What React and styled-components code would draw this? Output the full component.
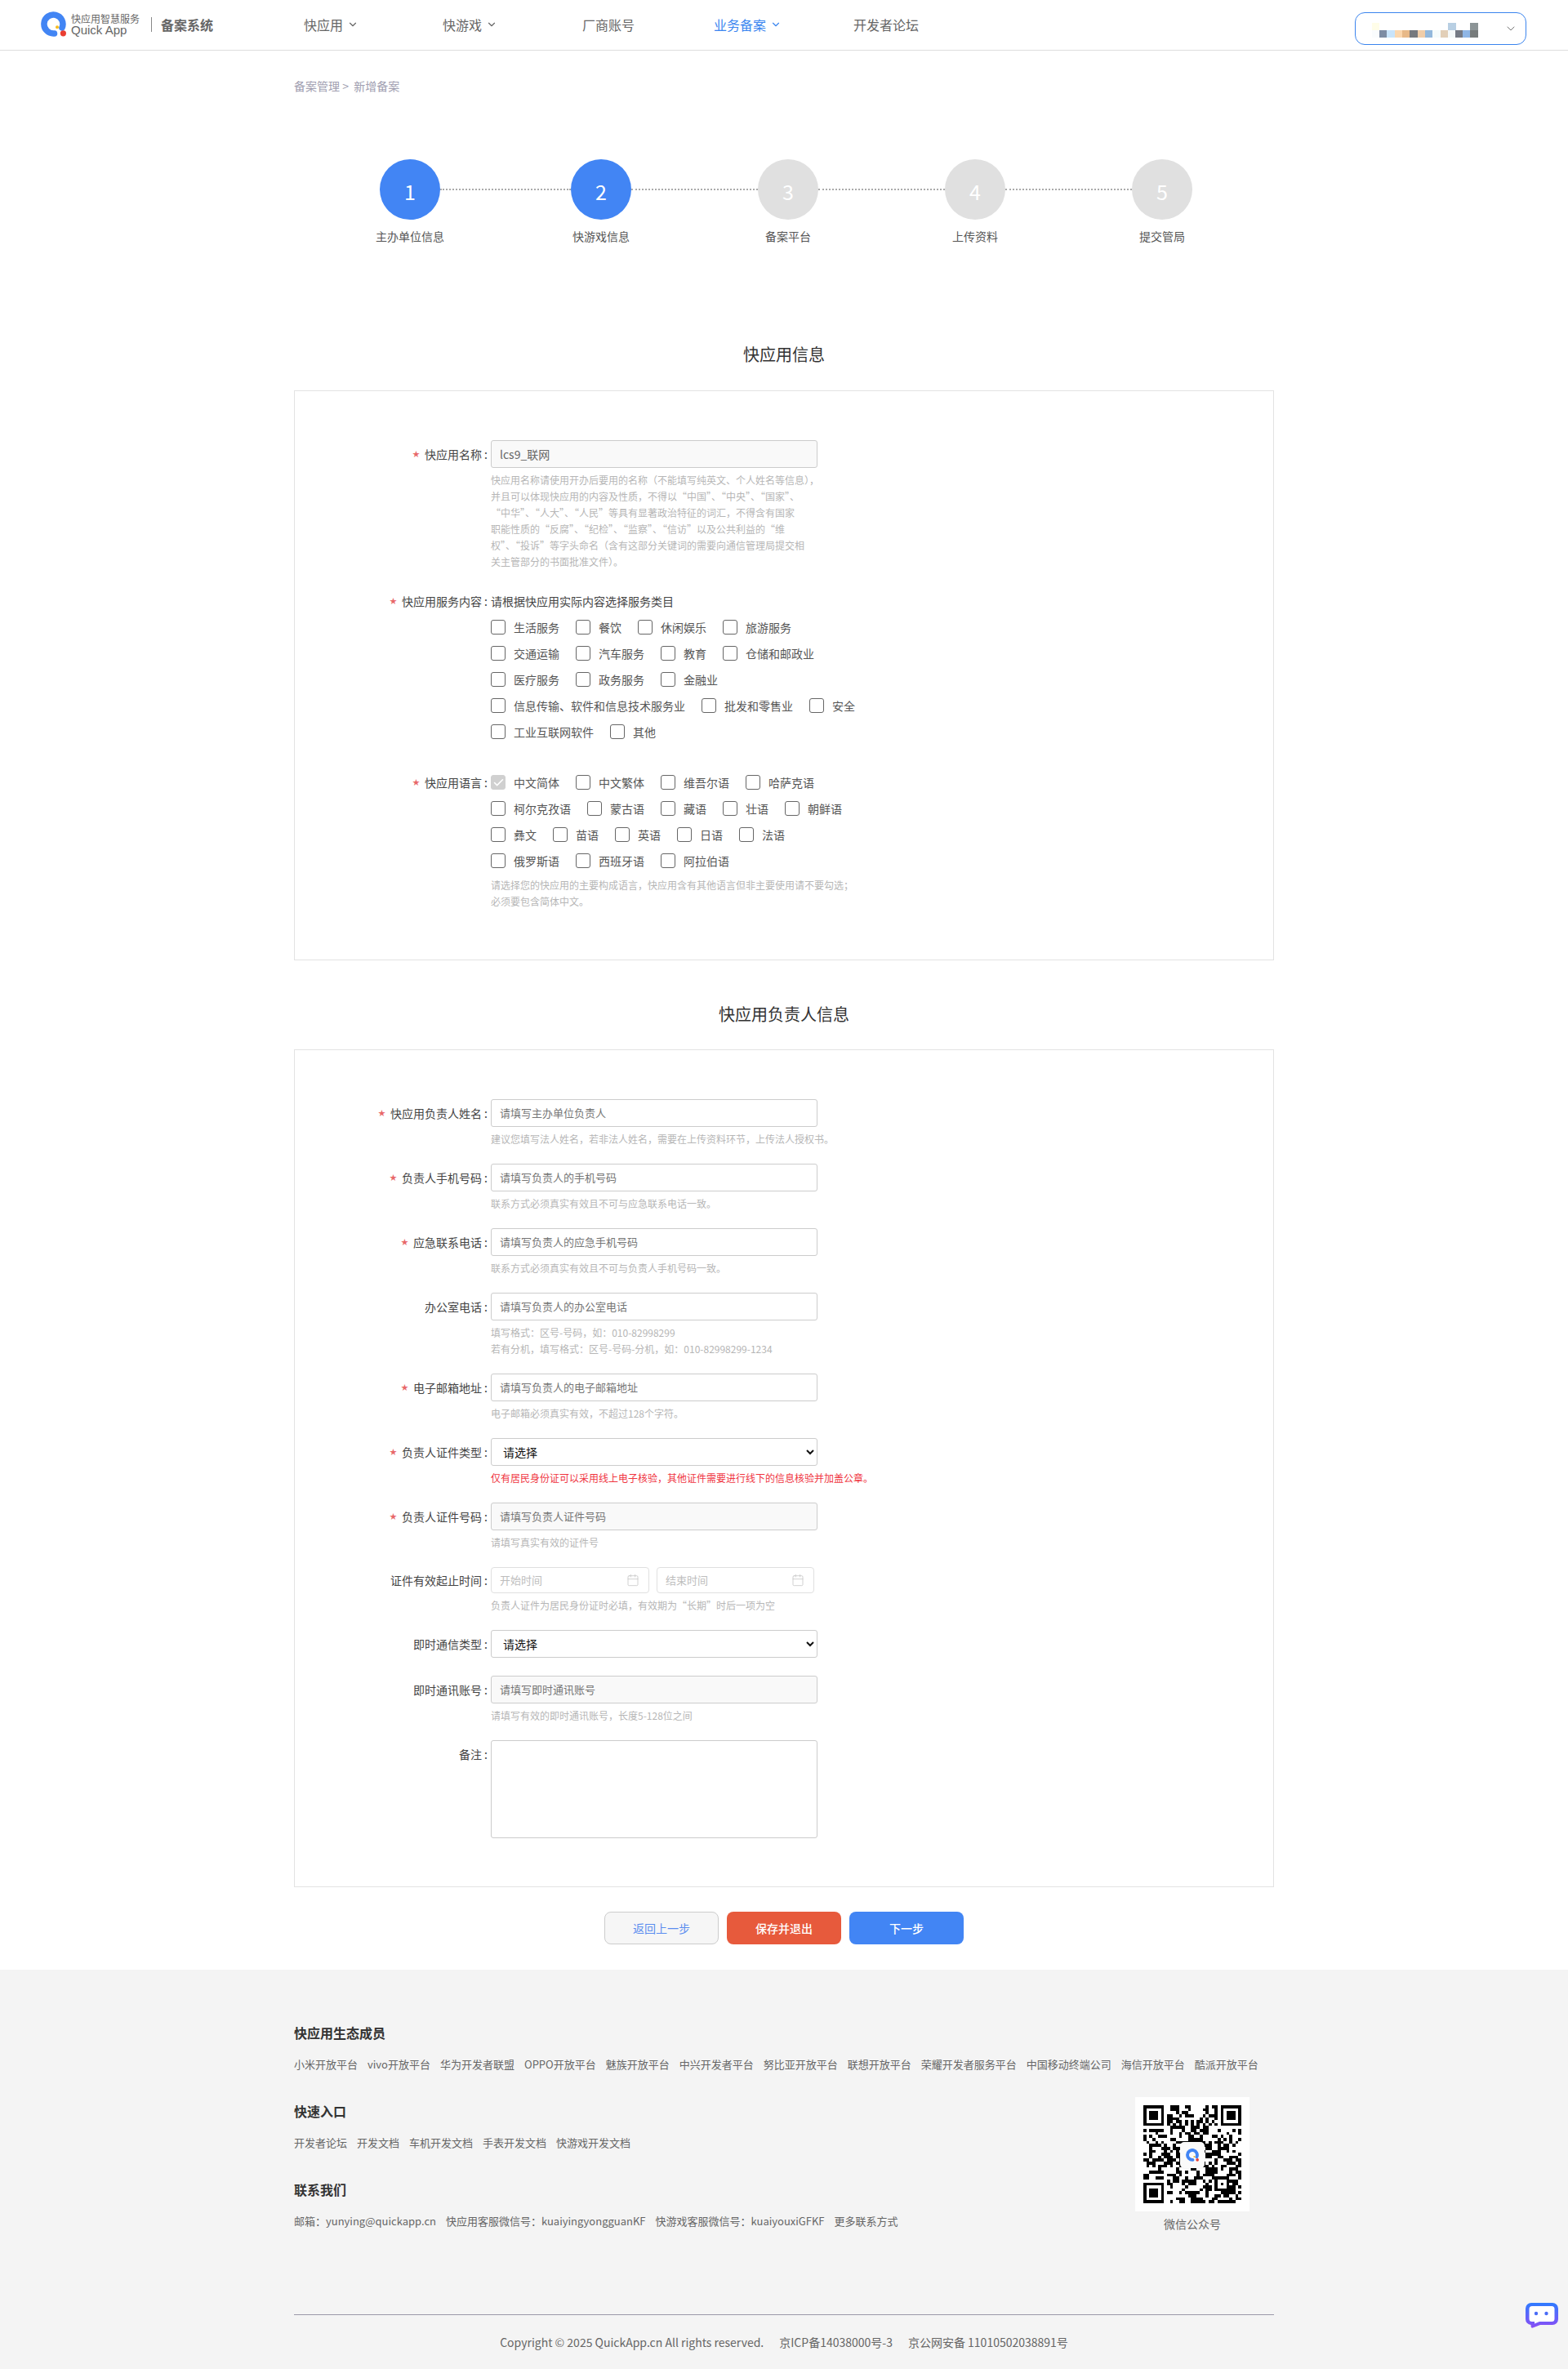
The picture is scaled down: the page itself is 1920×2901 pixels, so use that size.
import React from 'react';
import styled, { createGlobalStyle } from 'styled-components';
import { Calendar, Check, ChevronDown } from 'lucide-react';

const GlobalStyle = createGlobalStyle`
  html, body {
    margin: 0;
    padding: 0;
    background: #fff;
    font-family: "Noto Sans CJK SC", "Noto Sans", sans-serif;
    color: #444;
  }
  * {
    box-sizing: border-box;
  }
`;

const Page = styled.div`
  position: relative;
  width: 1920px;
  min-height: 2901px;
`;

const Header = styled.header`
  display: flex;
  align-items: center;
  height: 62px;
  padding: 0 51px 0 50px;
  border-bottom: 1px solid #ddd;
`;

const Brand = styled.div`
  display: flex;
  align-items: center;
  width: 322px;
  margin-bottom: 2px;
`;

const BrandText = styled.div`
  display: flex;
  flex-direction: column;
  margin-left: 6px;
  color: #666;
`;

const BrandCn = styled.span`
  font-size: 12px;
  line-height: 13px;
`;

const BrandEn = styled.span`
  font-family: "Liberation Sans", sans-serif;
  font-size: 15px;
  line-height: 15px;
`;

const BrandDivider = styled.span`
  width: 1px;
  height: 18px;
  margin: 0 11px 0 14px;
  background: #888;
`;

const BrandSystem = styled.span`
  font-size: 16px;
  font-weight: 700;
  color: #666;
`;

const Nav = styled.nav`
  display: grid;
  grid-template-columns: 170px 171px 161px 171px auto;
  flex: 1;
  align-items: center;
  margin-bottom: 2px;
`;

const NavItem = styled.a`
  display: flex;
  align-items: center;
  font-size: 16px;
  color: ${(p) => (p.$active ? '#3b86f0' : '#666')};

  svg {
    margin-left: 5px;
  }
`;

const Account = styled.div`
  display: flex;
  align-items: center;
  justify-content: space-between;
  width: 210px;
  height: 40px;
  margin-top: 9px;
  padding: 0 10px 0 20px;
  border: 1px solid #3a84ee;
  border-radius: 12px;
  color: #777;
`;

const MosaicSvg = styled.svg`
  margin-top: 4px;
`;

const Main = styled.main`
  width: 1200px;
  margin: 0 auto;
`;

const Breadcrumb = styled.div`
  margin-top: 33px;
  font-size: 14px;
  line-height: 20px;
  color: #a09eb0;
`;

const Stepper = styled.div`
  display: flex;
  margin: 80px 0 120px;
  padding-left: 105px;
`;

const Step = styled.div`
  display: flex;
  flex-direction: column;
  align-items: center;
  width: 74px;
`;

const StepCircle = styled.div`
  display: flex;
  align-items: center;
  justify-content: center;
  width: 74px;
  height: 74px;
  padding-top: 3px;
  border-radius: 50%;
  background: ${(p) => (p.$done ? '#4285f4' : '#e0e0e0')};
  color: #fff;
  font-size: 25px;
  font-weight: 400;
`;

const StepLabel = styled.div`
  margin-top: 10px;
  font-size: 14px;
  line-height: 20px;
  color: #555;
  white-space: nowrap;
`;

const StepLine = styled.div`
  width: ${(p) => p.$width}px;
  height: 0;
  margin-top: 36px;
  border-top: 2px dotted #aaa;
`;

const SectionTitle = styled.h2`
  margin: ${(p) => (p.$first ? '0 0 29px' : '51px 0 28px')};
  font-size: 20px;
  font-weight: 400;
  line-height: 30px;
  text-align: center;
  color: #333;
`;

const Card = styled.section`
  padding: 60px 0 ${(p) => p.$bottom ?? 59}px;
  border: 1px solid #e3e3e3;
`;

const Row = styled.div`
  display: flex;
  margin-bottom: ${(p) => p.$after ?? 20}px;

  &:last-child {
    margin-bottom: 0;
  }
`;

const Label = styled.label`
  flex: none;
  display: flex;
  justify-content: flex-end;
  align-items: center;
  align-self: flex-start;
  width: 236px;
  height: ${(p) => p.$height ?? 34}px;
  margin-right: 4px;
  padding-bottom: 1px;
  font-size: 14px;
  color: #444;
`;

const Star = styled.span`
  margin-right: 6px;
  font-size: 9px;
  color: #e8686a;
`;

const Colon = styled.span`
  margin-left: 3px;
`;

const Body = styled.div`
  display: flex;
  flex-direction: column;
`;

const Input = styled.input`
  width: 400px;
  height: 34px;
  padding: 0 10px 1px;
  border: 1px solid #ccc;
  border-radius: 3px;
  outline: none;
  background: ${(p) => (p.$muted ? '#f9f9f9' : '#fff')};
  font-family: inherit;
  font-size: 13px;
  color: #666;

  &::placeholder {
    color: #757575;
    opacity: 1;
  }
`;

const ValueInput = styled(Input)`
  font-size: 14px;
`;

const Select = styled.select`
  width: 400px;
  height: 34px;
  padding-left: 10px;
  border: 1px solid #ccc;
  border-radius: 3px;
  background: #fff;
  font-family: inherit;
  font-size: 14px;
  color: #111;
`;

const TextArea = styled.textarea`
  display: block;
  width: 400px;
  height: 120px;
  border: 1px solid #ccc;
  border-radius: 3px;
  outline: none;
  resize: none;
`;

const DateRange = styled.div`
  display: flex;
  gap: 9px;
`;

const DateField = styled.div`
  position: relative;
  width: ${(p) => p.$width}px;

  svg {
    position: absolute;
    top: 8px;
    right: 12px;
    color: #c8c8c8;
  }
`;

const DateInput = styled.input`
  width: 100%;
  height: 32px;
  padding: 0 10px 1px;
  border: 1px solid #e0e0e0;
  border-radius: 4px;
  outline: none;
  font-family: inherit;
  font-size: 13px;

  &::placeholder {
    color: #bdbdbd;
    opacity: 1;
  }
`;

const Hint = styled.div`
  margin-top: ${(p) => p.$top ?? 5}px;
  font-size: 12px;
  line-height: 20px;
  white-space: nowrap;
  color: ${(p) => (p.$danger ? '#f0353f' : '#b6b6b6')};
`;

const HintLine = styled.div``;

const ChoiceIntro = styled.div`
  display: flex;
  align-items: center;
  height: 33px;
  font-size: 14px;
  color: #444;
`;

const ChoiceRow = styled.div`
  display: flex;
  align-items: center;
  gap: 20px;
  height: 32px;
`;

const Choice = styled.span`
  display: flex;
  align-items: center;
  gap: 10px;
  font-size: 14px;
  color: #555;
`;

const Box = styled.span`
  display: flex;
  align-items: center;
  justify-content: center;
  width: 18px;
  height: 18px;
  border: 1px solid ${(p) => (p.$checked ? '#d0d0d0' : '#666')};
  border-radius: 3px;
  background: ${(p) => (p.$checked ? '#d0d0d0' : '#fff')};
  color: #fff;
`;

const Actions = styled.div`
  display: flex;
  justify-content: center;
  gap: 10px;
  margin: 30px 0 31px;
`;

const ActionButton = styled.button`
  width: 140px;
  height: 40px;
  border: 1px solid ${(p) => (p.$kind === 'back' ? '#ccc' : 'transparent')};
  border-radius: 8px;
  background: ${(p) =>
    p.$kind === 'back' ? '#f6f6f6' : p.$kind === 'save' ? '#e75a3c' : '#4285f4'};
  font-family: inherit;
  font-size: 14px;
  font-weight: ${(p) => (p.$kind === 'back' ? 400 : 500)};
  color: ${(p) => (p.$kind === 'back' ? '#5b8def' : '#fff')};
`;

const Footer = styled.footer`
  background: #f4f4f4;
  padding: 65px 0 23px;
`;

const FooterInner = styled.div`
  width: 1200px;
  margin: 0 auto;
`;

const FooterHeading = styled.h4`
  margin: 0 0 17px;
  font-size: 16px;
  font-weight: 700;
  line-height: 24px;
  color: #333;
`;

const FooterLinks = styled.div`
  display: flex;
  gap: 12px;
  font-size: 13px;
  line-height: 20px;
  white-space: nowrap;
  color: #666;
`;

const LowerRow = styled.div`
  display: flex;
  justify-content: space-between;
  margin-top: 30px;
  padding-right: 30px;
`;

const LowerLeft = styled.div`
  display: flex;
  flex-direction: column;
  gap: 35px;
  padding-top: 5px;
`;

const QrBlock = styled.div`
  display: flex;
  flex-direction: column;
  align-items: center;
  width: 140px;
`;

const QrCard = styled.div`
  position: relative;
  display: flex;
  align-items: center;
  justify-content: center;
  width: 140px;
  height: 140px;
  background: #fff;
`;

const QrBadge = styled.div`
  position: absolute;
  top: 55px;
  left: 55px;
  display: flex;
  align-items: center;
  justify-content: center;
  width: 30px;
  height: 32px;
  border-radius: 5px;
  background: #fafafa;
  box-shadow: 0 0 2px rgba(0, 0, 0, 0.15);
`;

const QrCaption = styled.div`
  margin-top: 5px;
  font-size: 14px;
  line-height: 20px;
  color: #666;
`;

const FooterRule = styled.div`
  height: 1px;
  margin-top: 101px;
  background: #9a98a8;
`;

const Copyright = styled.div`
  display: flex;
  justify-content: center;
  gap: 19px;
  margin-top: 23px;
  font-size: 14px;
  line-height: 20px;
  white-space: nowrap;
  color: #666;
`;

const ChatBubble = styled.div`
  position: absolute;
  right: 11px;
  bottom: 50px;
  width: 42px;
  height: 32px;
`;

const serviceRows = [
  ['生活服务', '餐饮', '休闲娱乐', '旅游服务'],
  ['交通运输', '汽车服务', '教育', '仓储和邮政业'],
  ['医疗服务', '政务服务', '金融业'],
  ['信息传输、软件和信息技术服务业', '批发和零售业', '安全'],
  ['工业互联网软件', '其他'],
];

const languageRows = [
  ['中文简体', '中文繁体', '维吾尔语', '哈萨克语'],
  ['柯尔克孜语', '蒙古语', '藏语', '壮语', '朝鲜语'],
  ['彝文', '苗语', '英语', '日语', '法语'],
  ['俄罗斯语', '西班牙语', '阿拉伯语'],
];

const nameHint = [
  '快应用名称请使用开办后要用的名称（不能填写纯英文、个人姓名等信息），',
  '并且可以体现快应用的内容及性质，不得以“中国”、“中央”、“国家”、',
  '“中华”、“人大”、“人民”等具有显著政治特征的词汇，不得含有国家',
  '职能性质的“反腐”、“纪检”、“监察”、“信访”以及公共利益的“维',
  '权”、“投诉”等字头命名（含有这部分关键词的需要向通信管理局提交相',
  '关主管部分的书面批准文件）。',
];

const steps = [
  { label: '主办单位信息', done: true, line: 160 },
  { label: '快游戏信息', done: true, line: 155 },
  { label: '备案平台', line: 155 },
  { label: '上传资料', line: 155 },
  { label: '提交管局' },
];

const ecoLinks = [
  '小米开放平台', 'vivo开放平台', '华为开发者联盟', 'OPPO开放平台', '魅族开放平台', '中兴开发者平台',
  '努比亚开放平台', '联想开放平台', '荣耀开发者服务平台', '中国移动终端公司', '海信开放平台', '酷派开放平台',
];

const quickLinks = ['开发者论坛', '开发文档', '车机开发文档', '手表开发文档', '快游戏开发文档'];

const contactLinks = [
  '邮箱：yunying@quickapp.cn',
  '快应用客服微信号：kuaiyingyongguanKF',
  '快游戏客服微信号：kuaiyouxiGFKF',
  '更多联系方式',
];

const mosaic = [
  [0, 0, '#fffde8'], [9, 0, '#ffffff'], [93, 0, '#b8cfe3'], [120, 0, '#8c9496'],
  [0, 9, '#fafcfd'], [9, 9, '#7d8ca3'], [18, 9, '#c9e4fa'], [28, 9, '#fbd7ae'],
  [37, 9, '#e8b988'], [46, 9, '#76797e'], [56, 9, '#f0cda9'], [65, 9, '#93b8dc'],
  [74, 9, '#f5fbfb'], [84, 9, '#e2cfb8'], [93, 9, '#f5f9fa'], [102, 9, '#757a85'],
  [111, 9, '#8fb6e6'], [120, 9, '#777b7b'],
];

// QR: fixed seed so the pattern stays the same between runs
const QR_SIZE = 33;

function buildQrPath() {
  let seed = 20250101;
  const next = () => {
    seed = (seed * 1664525 + 1013904223) >>> 0;
    return (seed >>> 16) / 65536;
  };
  const inFinder = (x, y) =>
    (x < 8 && y < 8) || (x >= QR_SIZE - 8 && y < 8) || (x < 8 && y >= QR_SIZE - 8);
  const ring = (cx, cy, x, y) => Math.max(Math.abs(x - cx), Math.abs(y - cy));
  let d = '';
  for (let y = 0; y < QR_SIZE; y++) {
    for (let x = 0; x < QR_SIZE; x++) {
      let on;
      if (inFinder(x, y)) {
        const cx = x < 8 ? 3 : QR_SIZE - 4;
        const cy = y < 8 ? 3 : QR_SIZE - 4;
        const r = ring(cx, cy, x, y);
        on = r === 3 || r <= 1;
      } else if (ring(26, 26, x, y) <= 2) {
        on = ring(26, 26, x, y) !== 1;
      } else if (y === 6) {
        on = x % 2 === 0;
      } else if (x === 6) {
        on = y % 2 === 0;
      } else {
        on = next() > 0.48;
      }
      if (on) d += `M${x} ${y}h1v1h-1z`;
    }
  }
  return d;
}

const qrPath = buildQrPath();

const QuickLogo = ({ size }) => (
  <svg width={size} height={size} viewBox="0 0 31 31" fill="none">
    <path d="M26 20A11.5 11.5 0 1 0 16.5 26.9" stroke="#4285f4" strokeWidth="7.5" strokeLinecap="round" />
    <circle cx="20" cy="19.3" r="2" fill="#f8bd1c" />
    <circle cx="27.4" cy="26.8" r="3.6" fill="#ea3e31" />
  </svg>
);

const MosaicName = () => (
  <MosaicSvg width="130" height="18" viewBox="0 0 130 18" shapeRendering="crispEdges">
    {mosaic.map(([x, y, fill]) => (
      <rect key={`${x}-${y}`} x={x} y={y} width="9.5" height="9" fill={fill} />
    ))}
  </MosaicSvg>
);

const Field = ({ label, required, after, labelHeight, children }) => (
  <Row $after={after}>
    <Label $height={labelHeight}>
      {required && <Star>★</Star>}
      {label}
      <Colon>:</Colon>
    </Label>
    <Body>{children}</Body>
  </Row>
);

const ChoiceGrid = ({ rows, checked }) =>
  rows.map((row) => (
    <ChoiceRow key={row[0]}>
      {row.map((name) => (
        <Choice key={name}>
          <Box $checked={name === checked}>
            {name === checked && <Check size={15} strokeWidth={2.5} />}
          </Box>
          {name}
        </Choice>
      ))}
    </ChoiceRow>
  ));

const LinkRow = ({ items }) => (
  <FooterLinks>
    {items.map((item) => (
      <span key={item}>{item}</span>
    ))}
  </FooterLinks>
);

const App = () => {
  return (
    <Page>
      <GlobalStyle />
      <Header>
        <Brand>
          <QuickLogo size={31} />
          <BrandText>
            <BrandCn>快应用智慧服务</BrandCn>
            <BrandEn>Quick App</BrandEn>
          </BrandText>
          <BrandDivider />
          <BrandSystem>备案系统</BrandSystem>
        </Brand>
        <Nav>
          <NavItem>快应用<ChevronDown size={14} strokeWidth={2} /></NavItem>
          <NavItem>快游戏<ChevronDown size={14} strokeWidth={2} /></NavItem>
          <NavItem>厂商账号</NavItem>
          <NavItem $active>业务备案<ChevronDown size={14} strokeWidth={2} /></NavItem>
          <NavItem>开发者论坛</NavItem>
        </Nav>
        <Account>
          <MosaicName />
          <ChevronDown size={16} strokeWidth={1.5} />
        </Account>
      </Header>

      <Main>
        <Breadcrumb>备案管理 &gt;&nbsp; 新增备案</Breadcrumb>

        <Stepper>
          {steps.map((step, i) => (
            <React.Fragment key={step.label}>
              <Step>
                <StepCircle $done={step.done}>{i + 1}</StepCircle>
                <StepLabel>{step.label}</StepLabel>
              </Step>
              {step.line && <StepLine $width={step.line} />}
            </React.Fragment>
          ))}
        </Stepper>

        <SectionTitle $first>快应用信息</SectionTitle>
        <Card $bottom={61}>
          <Field label="快应用名称" required after={21}>
            <ValueInput $muted readOnly value="lcs9_联网" />
            <Hint>
              {nameHint.map((line) => (
                <HintLine key={line}>{line}</HintLine>
              ))}
            </Hint>
          </Field>
          <Field label="快应用服务内容" required after={30}>
            <ChoiceIntro>请根据快应用实际内容选择服务类目</ChoiceIntro>
            <ChoiceGrid rows={serviceRows} />
          </Field>
          <Field label="快应用语言" required labelHeight={32}>
            <ChoiceGrid rows={languageRows} checked="中文简体" />
            <Hint $top={4}>
              <HintLine>请选择您的快应用的主要构成语言，快应用含有其他语言但非主要使用请不要勾选；</HintLine>
              <HintLine>必须要包含简体中文。</HintLine>
            </Hint>
          </Field>
        </Card>

        <SectionTitle>快应用负责人信息</SectionTitle>
        <Card>
          <Field label="快应用负责人姓名" required>
            <Input placeholder="请填写主办单位负责人" />
            <Hint>建议您填写法人姓名，若非法人姓名，需要在上传资料环节，上传法人授权书。</Hint>
          </Field>
          <Field label="负责人手机号码" required>
            <Input placeholder="请填写负责人的手机号码" />
            <Hint>联系方式必须真实有效且不可与应急联系电话一致。</Hint>
          </Field>
          <Field label="应急联系电话" required>
            <Input placeholder="请填写负责人的应急手机号码" />
            <Hint>联系方式必须真实有效且不可与负责人手机号码一致。</Hint>
          </Field>
          <Field label="办公室电话">
            <Input placeholder="请填写负责人的办公室电话" />
            <Hint>
              <HintLine>填写格式：区号-号码，如：010-82998299</HintLine>
              <HintLine>若有分机，填写格式：区号-号码-分机，如：010-82998299-1234</HintLine>
            </Hint>
          </Field>
          <Field label="电子邮箱地址" required>
            <Input placeholder="请填写负责人的电子邮箱地址" />
            <Hint>电子邮箱必须真实有效，不超过128个字符。</Hint>
          </Field>
          <Field label="负责人证件类型" required>
            <Select defaultValue="">
              <option value="">请选择</option>
            </Select>
            <Hint $danger>仅有居民身份证可以采用线上电子核验，其他证件需要进行线下的信息核验并加盖公章。</Hint>
          </Field>
          <Field label="负责人证件号码" required>
            <Input $muted readOnly placeholder="请填写负责人证件号码" />
            <Hint>请填写真实有效的证件号</Hint>
          </Field>
          <Field label="证件有效起止时间" labelHeight={32}>
            <DateRange>
              <DateField $width={194}>
                <DateInput placeholder="开始时间" />
                <Calendar size={16} strokeWidth={1.25} />
              </DateField>
              <DateField $width={193}>
                <DateInput placeholder="结束时间" />
                <Calendar size={16} strokeWidth={1.25} />
              </DateField>
            </DateRange>
            <Hint>负责人证件为居民身份证时必填，有效期为“长期”时后一项为空</Hint>
          </Field>
          <Field label="即时通信类型" after={22}>
            <Select defaultValue="">
              <option value="">请选择</option>
            </Select>
          </Field>
          <Field label="即时通讯账号">
            <Input $muted readOnly placeholder="请填写即时通讯账号" />
            <Hint>请填写有效的即时通讯账号，长度5-128位之间</Hint>
          </Field>
          <Field label="备注">
            <TextArea />
          </Field>
        </Card>

        <Actions>
          <ActionButton $kind="back">返回上一步</ActionButton>
          <ActionButton $kind="save">保存并退出</ActionButton>
          <ActionButton $kind="next">下一步</ActionButton>
        </Actions>
      </Main>

      <Footer>
        <FooterInner>
          <FooterHeading>快应用生态成员</FooterHeading>
          <LinkRow items={ecoLinks} />
          <LowerRow>
            <LowerLeft>
              <div>
                <FooterHeading>快速入口</FooterHeading>
                <LinkRow items={quickLinks} />
              </div>
              <div>
                <FooterHeading>联系我们</FooterHeading>
                <LinkRow items={contactLinks} />
              </div>
            </LowerLeft>
            <QrBlock>
              <QrCard>
                <svg width="120" height="120" viewBox={`0 0 ${QR_SIZE} ${QR_SIZE}`} shapeRendering="crispEdges">
                  <path d={qrPath} fill="#000" />
                </svg>
                <QrBadge>
                  <QuickLogo size={16} />
                </QrBadge>
              </QrCard>
              <QrCaption>微信公众号</QrCaption>
            </QrBlock>
          </LowerRow>
          <FooterRule />
          <Copyright>
            <span>Copyright © 2025 QuickApp.cn All rights reserved.</span>
            <span>京ICP备14038000号-3</span>
            <span>京公网安备 11010502038891号</span>
          </Copyright>
        </FooterInner>
      </Footer>

      <ChatBubble>
        <svg width="42" height="32" viewBox="0 0 42 32" fill="none">
          <defs>
            <linearGradient id="chatFrame" x1="0" y1="0" x2="0" y2="1">
              <stop offset="0" stopColor="#2f7bff" />
              <stop offset="1" stopColor="#8a4df5" />
            </linearGradient>
          </defs>
          <path
            d="M8 1H34A7 7 0 0 1 41 8V21A7 7 0 0 1 34 28H19L10 31.5C8.5 32 7.5 31 7.6 29.5V28A7 7 0 0 1 1 21V8A7 7 0 0 1 8 1Z"
            fill="url(#chatFrame)"
          />
          <path
            d="M9 5H33A3.5 3.5 0 0 1 36.5 8.5V20.5A3.5 3.5 0 0 1 33 24H18L12 26.5V24H9A3.5 3.5 0 0 1 5.5 20.5V8.5A3.5 3.5 0 0 1 9 5Z"
            fill="#fff"
          />
          <circle cx="14" cy="14" r="2.2" fill="#4a6cf7" />
          <circle cx="26.5" cy="14" r="2.2" fill="#4a6cf7" />
        </svg>
      </ChatBubble>
    </Page>
  );
};

export default App;
